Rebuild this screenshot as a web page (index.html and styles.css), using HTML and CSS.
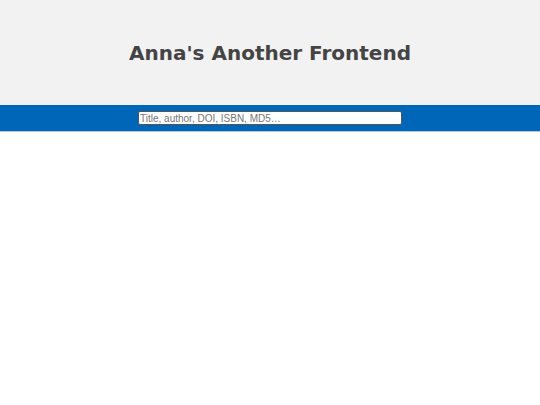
FILE: index.html
```html
<!DOCTYPE html>
<html>
<head>
<meta charset="utf-8">
<link rel="stylesheet" href="styles.css">
</head>
<body>
<header class="top">
  <h1 class="title">Anna's Another Frontend</h1>
</header>
<nav class="bar">
  <input class="search" type="text" placeholder="Title, author, DOI, ISBN, MD5…">
</nav>
</body>
</html>
```
FILE: styles.css
```css
html, body {
  margin: 0;
  padding: 0;
  background: #ffffff;
}
.top {
  background: #f2f2f2;
  height: 105px;
  display: flex;
  align-items: center;
  justify-content: center;
}
.title {
  margin: 0;
  font-family: "DejaVu Sans", Verdana, sans-serif;
  font-weight: bold;
  font-size: 20px;
  line-height: 24px;
  color: #444444;
  padding-top: 1px;
}
.bar {
  background: #0066b8;
  height: 26px;
  border-bottom: 1px solid #a9c8e4;
  display: flex;
  align-items: center;
  justify-content: center;
}
.search {
  box-sizing: border-box;
  width: 264px;
  height: 14px;
  margin: 0;
  padding: 0 1px;
  font-family: "Liberation Sans", Arial, sans-serif;
  font-size: 10px;
  border: 1px solid #555555;
  border-radius: 2px;
  background: #ffffff;
  color: #333;
}
.search::placeholder {
  color: #757575;
}
```
